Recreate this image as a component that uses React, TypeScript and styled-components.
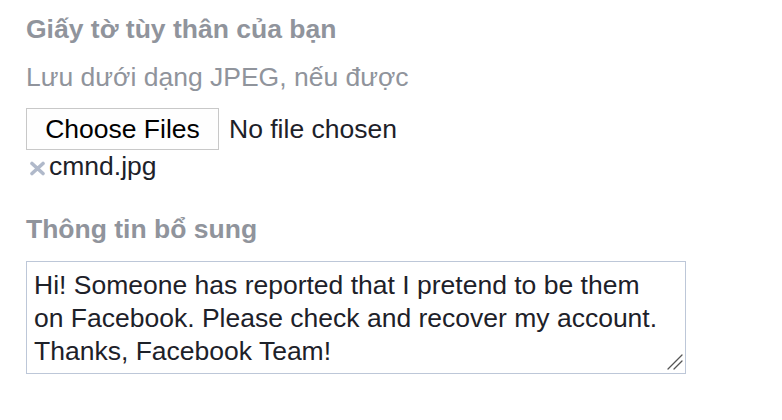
import React from "react";
import styled, { createGlobalStyle } from "styled-components";

const Global = createGlobalStyle`
  html, body { margin: 0; padding: 0; background: #ffffff; }
  body { font-family: "Liberation Sans", Arial, Helvetica, sans-serif; }
`;

const Page = styled.div`
  width: 782px;
  height: 420px;
  box-sizing: border-box;
  padding: 13px 26px 0 26px;
  display: flex;
  flex-direction: column;
  align-items: flex-start;
  font-size: 26.5px;
  line-height: 33px;
`;

const Heading = styled.div<{ $gap?: number }>`
  font-weight: bold;
  color: #90949c;
  margin-top: ${(p) => p.$gap ?? 0}px;
`;

const Hint = styled.div`
  color: #90949c;
  margin-top: 15px;
`;

const FileRow = styled.div`
  display: flex;
  align-items: center;
  gap: 10px;
  margin-top: 14px;
`;

const ChooseButton = styled.div`
  box-sizing: border-box;
  height: 42px;
  width: 193px;
  border: 1px solid #c8c8c8;
  background: #fefefe;
  color: #000;
  display: flex;
  align-items: center;
  justify-content: center;
`;

const NoFile = styled.span`
  color: #1d2129;
`;

const Attachment = styled.div`
  display: flex;
  align-items: center;
  gap: 3px;
  color: #1d2129;
  padding-left: 3px;
`;

const RemoveIcon = styled.svg`
  width: 17px;
  height: 15px;
  margin-top: 4px;
`;

const NotesBox = styled.div`
  position: relative;
  margin-top: 15px;
  width: 660px;
  height: 113px;
`;

const Notes = styled.textarea`
  box-sizing: border-box;
  display: block;
  width: 100%;
  height: 100%;
  margin: 0;
  border: 1px solid #bdc7d8;
  padding: 7px 7px 5px;
  font-family: "Liberation Sans", Arial, Helvetica, sans-serif;
  font-size: 26.5px;
  line-height: 33px;
  color: #1d2129;
  background: #fff;
  outline: none;
  resize: none;
  overflow: hidden;
`;

const Grip = styled.svg`
  position: absolute;
  right: 3px;
  bottom: 4px;
  width: 17px;
  height: 17px;
  pointer-events: none;
`;

const message =
  "Hi! Someone has reported that I pretend to be them\non Facebook. Please check and recover my account.\nThanks, Facebook Team!";

export default function App() {
  return (
    <>
      <Global />
      <Page>
        <Heading>Giấy tờ tùy thân của bạn</Heading>
        <Hint>Lưu dưới dạng JPEG, nếu được</Hint>
        <FileRow>
          <ChooseButton>Choose Files</ChooseButton>
          <NoFile>No file chosen</NoFile>
        </FileRow>
        <Attachment>
          <RemoveIcon viewBox="0 0 17 15">
            <path d="M3 2.5 L14 12.5 M14 2.5 L3 12.5" stroke="#b0b9ca" strokeWidth="3.6" strokeLinecap="round" />
          </RemoveIcon>
          <span>cmnd.jpg</span>
        </Attachment>
        <Heading $gap={30}>Thông tin bổ sung</Heading>
        <NotesBox>
          <Notes readOnly defaultValue={message} />
          <Grip viewBox="0 0 17 17">
            <path d="M2 16 L16 2 M8 16 L16 8" stroke="#555" strokeWidth="1.3" strokeLinecap="round" />
          </Grip>
        </NotesBox>
      </Page>
    </>
  );
}
